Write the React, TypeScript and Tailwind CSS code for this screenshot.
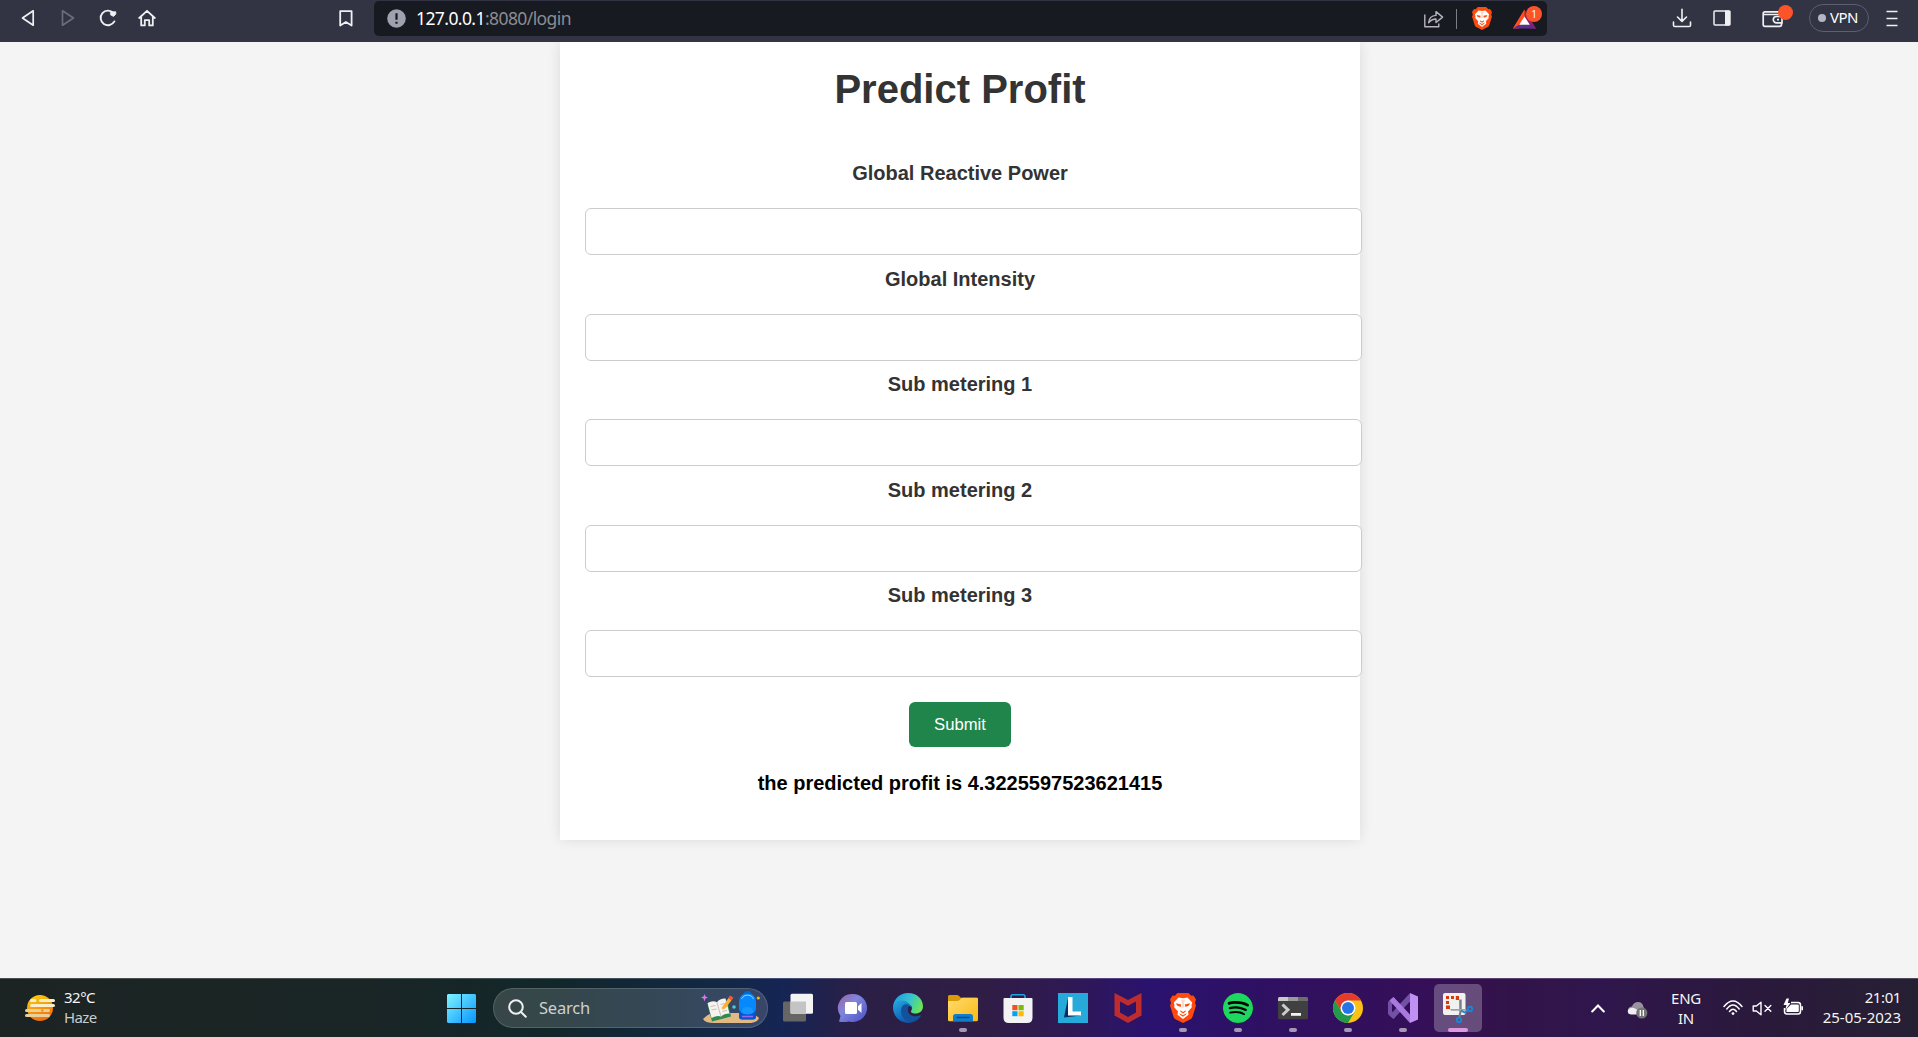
import React from "react";
import { SiSpotify } from "react-icons/si";

const fields = [
  "Global Reactive Power",
  "Global Intensity",
  "Sub metering 1",
  "Sub metering 2",
  "Sub metering 3",
];

function BraveLion({ className }: { className: string }) {
  return (
    <svg viewBox="0 0 26 30" className={className}>
      <path d="M7.500 0h11l2.700 2.800 2.300-.3 2.500 4-1 3.500 1 2.500-3.500 11.200q-.5 1.500-2 2.500L13 30l-7.500-3.800q-1.500-1-2-2.500L0 12.500 1 10 0 6.500l2.500-4 2.300.3z" fill="#ff4a0d" />
      <path d="M8.500 4.500 13 5.300l4.500-.8 4.700 5-.7 3 .3 1.800-3.800 4.200.5 3.200L13 26l-5.500-4.300.5-3.200-3.800-4.200.3-1.800-.7-3z" fill="#fff" />
      <path d="M6 10.300l5.200 1.200-.6 2.400L7 12.600zM20 10.300l-5.200 1.200.6 2.400 3.600-1.300zM10.200 17.300 13 19l2.800-1.700-.3 1.500L13 20.600l-2.500-1.800zM9.500 20.300l3.500 2 3.500-2-.3 1.200L13 23.700l-3.200-2.200z" fill="#ff4a0d" />
      <path d="M11 6.500 13 7l2-.5-1 4 .3 4h-2.600l.3-4z" fill="#ffd9c9" />
    </svg>
  );
}

function Toolbar() {
  return (
    <header className="flex h-[42px] shrink-0 items-start bg-[#323443] font-['Noto_Sans',sans-serif]">
      <div className="flex h-9 w-[374px] shrink-0 items-center pl-[21px]">
        <svg width="14" height="18" viewBox="0 0 14 18" fill="none" stroke="#f0f0f3" strokeWidth="1.7" strokeLinejoin="round">
          <path d="M12.2 1.8v14.4L1.5 9z" />
        </svg>
        <svg className="ml-[26px]" width="14" height="18" viewBox="0 0 14 18" fill="none" stroke="#6a6c7a" strokeWidth="1.7" strokeLinejoin="round">
          <path d="M1.5 1.8v14.4L12.5 9z" />
        </svg>
        <svg className="ml-[23px]" width="20" height="20" viewBox="0 0 20 20" fill="none" stroke="#f0f0f3" strokeWidth="1.9" strokeLinecap="round">
          <path d="M15.3 4.9A7.3 7.3 0 1 0 16.4 13.4" />
          <path d="M12.8 3.8h5v2.4l-2.3 2.2-2.7-1.4z" fill="#f0f0f3" stroke="#f0f0f3" strokeWidth=".8" />
        </svg>
        <svg className="ml-[20px]" width="18" height="18" viewBox="0 0 18 18" fill="none" stroke="#f0f0f3" strokeWidth="1.8" strokeLinejoin="round" strokeLinecap="round">
          <path d="M1.2 9 9 1.8 16.8 9M3.2 7.6v8.8h3.6v-5.2h4.4v5.2h3.6V7.6" />
        </svg>
        <svg className="ml-[183px]" width="14" height="17" viewBox="0 0 14 17" fill="none" stroke="#f0f0f3" strokeWidth="1.8" strokeLinejoin="round">
          <path d="M1.2 1.2h11.4v14.4L6.9 12l-5.7 3.6z" />
        </svg>
      </div>

      <div className="mt-px flex h-[35px] w-[1173px] shrink-0 items-center rounded-[5px] bg-[#181a21] pl-[13px]">
        <svg width="19" height="19" viewBox="0 0 19 19">
          <circle cx="9.5" cy="9.5" r="9.3" fill="#a0a1ae" />
          <path d="M9.5 4.2v6.5M9.5 12.8v2" stroke="#181a21" strokeWidth="2.2" />
        </svg>
        <div className="-mt-[2px] ml-[10px] w-[1001px] text-[17.5px] leading-[24px] tracking-[-0.58px] text-[#8a8c91]">
          <span className="text-white">127.0.0.1</span>:8080/login
        </div>
        <svg className="ml-[6px]" width="21" height="18" viewBox="0 0 21 18" fill="none" stroke="#b5b6bb" strokeWidth="1.4" strokeLinejoin="round">
          <path d="M1.8 4.4v12.4h14v-3.4" />
          <path d="M5.6 12.8C6 8 9 5.6 13 5.4V1.6l6.6 5.5-6.6 5.4V9c-3.2 0-5.4 1.2-7.4 3.8z" />
        </svg>
        <span className="ml-[12px] h-5 w-px bg-[#7c7e83]" />
        <BraveLion className="ml-[15px] h-[23px] w-5" />
        <span className="relative ml-[21px] block h-[21px] w-[23px]">
          <svg className="absolute inset-0" width="23" height="21" viewBox="0 0 24 21">
            <path d="M12 1 0 21h6.5L12 11z" fill="#ff4d20" />
            <path d="M12 1l12 20h-6.5L12 11z" fill="#9e1f63" />
            <path d="M0 21l4.500-4.500h15L24 21z" fill="#5b2d91" />
            <path d="M0 21 12 1v9L6 17z" fill="#ff4d20" />
            <path d="M12 8.500 6.500 17h11z" fill="#fff" />
          </svg>
          <span className="absolute -top-[2px] left-[13px] flex h-[16px] w-[16px] items-center justify-center rounded-full bg-[#fb542b] text-[10px] leading-none text-white">1</span>
        </span>
      </div>

      <div className="flex h-9 w-[371px] items-center pl-[125px]">
        <svg width="20" height="20" viewBox="0 0 20 20" fill="none" stroke="#f0f0f3" strokeWidth="1.6" strokeLinecap="round" strokeLinejoin="round">
          <path d="M10 1.200v12M5.500 9 10 13.400 14.500 9M1.500 14v3.200q0 1.300 1.300 1.300h14.400q1.300 0 1.300-1.300V14" />
        </svg>
        <svg className="ml-[21px]" width="18" height="16" viewBox="0 0 18 16">
          <rect x="1" y="1" width="15.500" height="14" rx="1" fill="none" stroke="#f0f0f3" strokeWidth="1.500" />
          <path d="M12 .500h4.600q1 0 1 1v13q0 1-1 1H12z" fill="#f0f0f3" />
        </svg>
        <span className="relative ml-[31px] block h-[18px] w-[30px]">
          <svg width="22" height="19" viewBox="0 0 22 19" fill="none" stroke="#f0f0f3" strokeWidth="1.700" strokeLinejoin="round">
            <path d="M20 7V4.500Q20 2.800 18.200 2.800H3Q1.200 2.800 1.200 4.500v11Q1.200 17.300 3 17.300h14.500q2 0 2-1.800V14M1.500 5.500H18" />
            <path d="M20 7.500h-5.500a3.200 3.200 0 0 0 0 6.400H20zM15 10.700h2" />
          </svg>
          <span className="absolute -top-[4px] left-[16px] h-[15px] w-[15px] rounded-full bg-[#fb542b]" />
        </span>
        <div className="ml-[17px] flex h-[28px] w-[60px] items-center rounded-full border border-[#5c5e72] pl-[8px] text-[15px] leading-none tracking-[-0.5px] text-white">
          <span className="mr-[4px] h-[8px] w-[8px] rounded-full bg-[#b4b5c6]" />
          <span className="-mt-[2px]">VPN</span>
        </div>
        <svg className="ml-[17px]" width="12" height="17" viewBox="0 0 12 17" stroke="#f0f0f3" strokeWidth="1.600">
          <path d="M.5 1.500h11M.5 8.500h11M.5 15.500h11" />
        </svg>
      </div>
    </header>
  );
}

function FormPage() {
  return (
    <main className="min-h-0 flex-1 overflow-hidden bg-[#f4f4f4] font-['Liberation_Sans',Arial,sans-serif]">
      <form className="ml-[560px] flex h-[798px] w-[800px] flex-col items-center bg-white pt-[24px] shadow-[0_0_12.5px_rgba(0,0,0,0.1)]">
        <h1 className="mb-[49px] h-[46px] text-[40px] font-bold leading-[46px] text-[#333333]">Predict Profit</h1>
        {fields.map((name) => (
          <div key={name} className="flex h-[105.5px] w-full flex-col items-center">
            <label className="h-6 text-[20px] font-bold leading-6 text-[#333333]">{name}</label>
            <input
              aria-label={name}
              className="mt-[23px] ml-[25px] h-[47px] w-[777px] shrink-0 self-start rounded-[6px] border border-[#cccccc] bg-white px-3"
            />
          </div>
        ))}
        <button type="button" className="mt-[13.5px] h-[45px] w-[102px] rounded-[6px] bg-[#20854b] text-[16.67px] leading-[45px] text-white">
          Submit
        </button>
        <p className="mt-6 text-[20px] font-bold leading-6 text-black">the predicted profit is 4.3225597523621415</p>
      </form>
    </main>
  );
}

const icon = "h-[30px] w-[30px] overflow-visible";

const TaskView = () => (
  <svg className={icon} viewBox="0 0 30 30">
    <rect x="0" y="8.500" width="23" height="20" rx="1.500" fill="#666" />
    <rect x="7.500" y=".8" width="22.500" height="20" rx="1.500" fill="#f4f4f4" />
    <path d="M7.500 8.500H23v12.300H9q-1.500 0-1.500-1.500z" fill="#c4c4c4" />
  </svg>
);
const Chat = () => (
  <svg className={icon} viewBox="0 0 30 30">
    <defs>
      <linearGradient id="chat" x1="0" y1="0" x2="1" y2="1">
        <stop offset="0" stopColor="#a05f9b" /><stop offset=".4" stopColor="#7f86dc" /><stop offset="1" stopColor="#4b50c4" />
      </linearGradient>
    </defs>
    <path d="M15 1a14 14 0 1 1-4 27.400Q6 29.600 1 28.700L2.500 23A14 14 0 0 1 15 1z" fill="url(#chat)" />
    <rect x="7" y="9" width="12" height="12" rx="1.500" fill="#fff" />
    <path d="M20 13.200l3.500-3.200v10L20 16.800z" fill="#fff" />
  </svg>
);
const Edge = () => (
  <svg className={icon} viewBox="0 0 30 30">
    <defs>
      <linearGradient id="edgeTop" x1="0" y1=".3" x2="1" y2=".6">
        <stop offset="0" stopColor="#1c9ee0" /><stop offset=".5" stopColor="#35c1d1" /><stop offset="1" stopColor="#6be84f" />
      </linearGradient>
      <linearGradient id="edgeLow" x1="0" y1="0" x2=".5" y2="1">
        <stop offset="0" stopColor="#27a9e1" /><stop offset="1" stopColor="#0c59b5" />
      </linearGradient>
    </defs>
    <path d="M0 13.500C1 5.500 7 0 15 0c9 0 15 6.200 15 13.400 0 4.600-3.600 7-7.500 7-3.800 0-5.300-1.600-4.200-3 1.300-1.600 1-5.400-3.200-6.400z" fill="url(#edgeTop)" />
    <path d="M0 14.600C1 9.400 5 7.500 8.600 7.500c5.400 0 9 3.500 9.500 6.500-5-3-8.500.5-8.500 4.200 0 5.800 4.400 10 9.400 11A15 15 0 0 1 0 14.600z" fill="url(#edgeLow)" />
    <path d="M15.500 11.800C10.500 10 8 14 8 18c0 7.500 7.500 12.300 12.300 11 3.200-1 5.600-3 7.600-6 .3-.6-.3-1-.8-.7-6 2.800-12.300-.4-12.300-5.300 0-2 1.200-3.600.7-5.200z" fill="#12529b" />
  </svg>
);
const Explorer = () => (
  <svg className={icon} viewBox="0 0 30 30">
    <defs>
      <linearGradient id="folder" x1="0" y1="0" x2="1" y2="1">
        <stop offset="0" stopColor="#ffdc70" /><stop offset="1" stopColor="#fcb813" />
      </linearGradient>
    </defs>
    <path d="M0 3.500Q0 2 1.500 2H9q1 0 1.800.8L13 4.700h15.500q1.500 0 1.500 1.500V12H0z" fill="#dc9a09" />
    <path d="M0 8h9.500q1 0 1.800-.8L13 5.500q.6-.8 1.500-.8H29q1 0 1 1v21q0 1.500-1.500 1.500h-27Q0 28.200 0 26.700z" fill="url(#folder)" />
    <path d="M5 28.200v-4.700q0-2.500 2.500-2.500h15q2.500 0 2.500 2.500v4.700z" fill="#117bcd" />
    <path d="M9 24.500h12" stroke="#074c8c" strokeWidth="1.300" strokeLinecap="round" />
  </svg>
);
const Store = () => (
  <svg className={icon} viewBox="0 0 30 30">
    <path d="M8 7V3.500Q8 1.700 9.800 1.700h10.400Q22 1.700 22 3.500V7" fill="none" stroke="#1da4e5" strokeWidth="1.600" />
    <path d="M.5 6q0-.9 1-.9h27q1 0 1 .9v18.500q0 5.500-5.500 5.500H6Q.5 30 .5 24.500z" fill="#f3f3f3" />
    <path d="M9.300 12h5.200v5.200H9.300z" fill="#f25022" />
    <path d="M15.500 12h5.200v5.200h-5.200z" fill="#7fba00" />
    <path d="M9.300 18.200h5.200v5H9.300z" fill="#00a4ef" />
    <path d="M15.500 18.200h5.200v5h-5.200z" fill="#ffb900" />
  </svg>
);
const LApp = () => (
  <svg className={icon} viewBox="0 0 30 30">
    <path d="M0 0h30v30H0z" fill="#26aad9" />
    <path d="M10 5 6 24.500l17-2L10 19z" fill="#0a2c62" />
    <path d="M10 4h4.500v14.500H23v4H10z" fill="#fff" />
  </svg>
);
const Shield = () => (
  <svg className={icon} viewBox="0 0 30 30">
    <path d="M1.500 0 15 7 28.500 0v22.500L15 30 1.500 22.500zM7 8.500v11l8 4.500 8-4.500v-11l-8 4.300z" fill="#bf2c2d" fillRule="evenodd" />
  </svg>
);
const BraveApp = () => <BraveLion className="h-[30px] w-[26px]" />;
const Spotify = () => (
  <span className="flex h-[30px] w-[30px] items-center justify-center rounded-full bg-black">
    <SiSpotify className="h-[30px] w-[30px] shrink-0 text-[#1ed760]" />
  </span>
);
const Terminal = () => (
  <svg className={icon} viewBox="0 0 30 30">
    <rect y="4" width="30" height="22.200" rx="1.500" fill="#404040" />
    <path d="M0 8V5.500Q0 4 1.500 4H10v4z" fill="#cacaca" />
    <path d="M10 4h10v4H10z" fill="#999" />
    <path d="M20 4h8.500Q30 4 30 5.500V8H20z" fill="#6d6d6d" />
    <path d="m4.500 11.500 5.500 5.300-5.500 5.200" fill="none" stroke="#ccc" strokeWidth="3" />
    <path d="M13 20h10v2.800H13z" fill="#f2f2f2" />
  </svg>
);
const Chrome = () => (
  <svg className={icon} viewBox="0 0 30 30">
    <circle cx="15" cy="15" r="15" fill="#fbc116" />
    <path d="M2 7.500A15 15 0 0 1 28 7.500H15L8.500 18.700z" fill="#e33b2e" />
    <path d="M2 7.500 8.500 18.700 15 22.500l6.500-3.800L15 30A15 15 0 0 1 2 7.500z" fill="#229a4b" />
    <circle cx="15" cy="15" r="7.500" fill="#fff" />
    <circle cx="15" cy="15" r="6" fill="#2675e8" />
  </svg>
);
const VisualStudio = () => (
  <svg className={icon} viewBox="0 0 30 30">
    <path d="M0 9 1.500 7.500 5.500 4 9 8.500 4 11.500v7L9 21.500 5.500 26 1.500 22.500 0 21z" fill="#7250a5" />
    <path d="M22 0v8.500L5.500 26l-4-3.500z" fill="#7250a5" />
    <path d="M1.500 7.500 5.500 4 22 21.500V30z" fill="#a979df" />
    <path d="M22 0l8 3.500v23L22 30z" fill="#c190f3" />
  </svg>
);
const Snip = () => (
  <svg className={icon} viewBox="0 0 30 30">
    <rect x="0" y="0" width="22.500" height="22" rx="2" fill="#f1f1f1" />
    <path d="M3 3h3v3H3zM8 3h3v3H8zM12.800 3H16v4h-3.200zM3 8h3v3H3zM3 12.500h4V16H3z" fill="#d83b0a" />
    <path d="M16.200 6.500h2.500v12l-1.300 6-2-.500.900-5.500z" fill="#788087" />
    <path d="M6.500 16h16l2 1.800H8.500z" fill="#9ca4aa" />
    <circle cx="27" cy="16" r="2.200" fill="none" stroke="#1887d5" strokeWidth="1.900" />
    <circle cx="16" cy="27" r="2.200" fill="none" stroke="#1887d5" strokeWidth="1.900" />
    <path d="m18 17.500 3.500 2 3.800-2" fill="none" stroke="#1887d5" strokeWidth="1.800" />
  </svg>
);

const apps: { name: string; Icon: () => React.ReactElement; state?: "open" | "active" }[] = [
  { name: "taskview", Icon: TaskView },
  { name: "chat", Icon: Chat },
  { name: "edge", Icon: Edge },
  { name: "explorer", Icon: Explorer, state: "open" },
  { name: "store", Icon: Store },
  { name: "l", Icon: LApp },
  { name: "shield", Icon: Shield },
  { name: "brave", Icon: BraveApp, state: "open" },
  { name: "spotify", Icon: Spotify, state: "open" },
  { name: "terminal", Icon: Terminal, state: "open" },
  { name: "chrome", Icon: Chrome, state: "open" },
  { name: "vs", Icon: VisualStudio, state: "open" },
  { name: "snip", Icon: Snip, state: "active" },
];

function Weather() {
  return (
    <svg width="30" height="26" viewBox="0 0 30 26">
      <defs>
        <linearGradient id="sun" x1=".2" y1="0" x2=".6" y2="1">
          <stop offset="0" stopColor="#ffcd0f" /><stop offset="1" stopColor="#f2690c" />
        </linearGradient>
      </defs>
      <circle cx="15" cy="13" r="13" fill="url(#sun)" />
      <g strokeWidth="3" strokeLinecap="round">
        <path d="M6.500 5.500H10M15.500 5.500h13M6.500 10.500h22" stroke="#fbeecb" />
        <path d="M1.500 15.500h22M1.500 20.500h22" stroke="#e9cf9a" />
        <path d="M17.300 15.500h0" stroke="#f28d1a" strokeWidth="2.500" />
      </g>
    </svg>
  );
}

function SearchArt() {
  return (
    <svg className="ml-auto mr-[7px]" width="60" height="34" viewBox="0 0 60 34">
      <path d="M3 28C9 22 14 20 24 22h25q6 1 10 5-1 4-8 5H14Q5 32 3 28z" fill="#e2b983" />
      <path d="M4.500 3l1 2.500L8 6.500 5.500 7.500l-1 3-1-3-2.500-1 2.500-1z" fill="#d974f2" />
      <path d="m7.500 14 20-4 3.500 15.500L12 30.500z" fill="#2d8a50" />
      <path d="M7.500 12q5.500-3 9.500-.8 3-4 8.500-3.700l4 15q-5.500 0-8.500 3-4-1.300-9.500 1.500z" fill="#f6f2ee" />
      <path d="m17 11.500 4 14M10.500 15.500l5-1M11.500 19l5-1M20.500 13.500l4-1M21.500 17l5-1.500M22.500 20.500l4.500-1.200" stroke="#bcaeb0" strokeWidth=".8" />
      <path d="M22.500 15.500 28.500 7l3 2.200-6 8-3.500 1.500z" fill="#ffaf35" />
      <path d="m28.300 7 1.700-2.500 3.500 2.300-1.900 2.500z" fill="#f25b45" />
      <circle cx="34" cy="16" r="1.800" fill="#54c6dc" />
      <circle cx="58.300" cy="7" r="1.600" fill="#f5b80e" />
      <path d="M44.500 3.500q0-2.500 3-2.500t3 2.500" stroke="#0867cb" strokeWidth="1.800" fill="none" />
      <path d="M39 11q0-8.500 8.500-8.500T56 11v14.500q0 3-3 3H42q-3 0-3-3z" fill="#0788fb" />
      <path d="M39 18v7.500q0 3 3 3h11q3 0 3-3V18q-1 5-8.500 5T39 18z" fill="#0754cf" />
      <path d="M41.500 21.500q0-5.500 6-5.500t6 5.500q-2 2-6 2t-6-2z" fill="#1596ff" />
      <path d="M41.500 8q1.500-4 6-4t6 4" stroke="#8ad1ff" fill="none" />
      <path d="M42 25.500h11" stroke="#8c6af4" strokeWidth="1.600" />
    </svg>
  );
}

function Taskbar() {
  return (
    <footer className="flex h-[59px] shrink-0 items-center border-t border-white/20 bg-[linear-gradient(90deg,#1c2423_0,#1a2525_360px,#12272b_560px,#122845_720px,#152554_780px,#2a1f46_860px,#301d45_980px,#2f1954_1070px,#2a126f_1150px,#30105f_1300px,#350f58_1420px,#321349_1510px,#2f164c_1600px,#2a193b_1760px,#262033_1918px)] font-['Noto_Sans',sans-serif] text-[15px] leading-5 text-[#f5f5f5]">
      <div className="flex w-[447px] shrink-0 items-center pl-[25px]">
        <Weather />
        <div className="-mt-[3px] ml-[9px]">
          <div className="tracking-[-0.5px]">32°C</div>
          <div className="tracking-[-0.6px] text-[#c9cccb]">Haze</div>
        </div>
      </div>
      <svg width="29" height="29" viewBox="0 0 29 29">
        <defs>
          <linearGradient id="win" x1="0" y1="0" x2="1" y2="1">
            <stop offset="0" stopColor="#80f3ff" /><stop offset="1" stopColor="#0595ff" />
          </linearGradient>
        </defs>
        <path d="M1 0h13v14H0V1zM15 0h13l1 1v13H15zM0 15h14v14H1l-1-1zM15 15h14v13l-1 1H15z" fill="url(#win)" />
      </svg>
      <div className="ml-[17px] flex h-10 w-[275px] shrink-0 items-center rounded-full border border-white/15 bg-white/15 pl-[14px]">
        <svg width="19" height="19" viewBox="0 0 19 19" fill="none" stroke="#eef0f0" strokeWidth="2" strokeLinecap="round">
          <circle cx="8" cy="8" r="6.800" /><path d="m13 13 4.800 4.800" />
        </svg>
        <span className="ml-[12px] text-[16.5px] tracking-[-0.2px] text-[#cdd2d3]">Search</span>
        <SearchArt />
      </div>
      <div className="ml-[2.5px] flex h-full shrink-0 items-center">
        {apps.map(({ name, Icon, state }) => (
          <div key={name} className="relative flex h-full w-[55px] items-center justify-center">
            {state === "active" && <span className="absolute left-[3.500px] top-[5px] h-[48px] w-[48px] rounded-[5px] bg-white/25" />}
            <span className="relative"><Icon /></span>
            {state === "open" && <span className="absolute bottom-[5px] left-[23.500px] h-[4px] w-[8px] rounded-full bg-[#a598b5]" />}
            {state === "active" && <span className="absolute bottom-[5px] left-[17.500px] h-[4px] w-[20px] rounded-full bg-[#dd9ae0]" />}
          </div>
        ))}
      </div>
      <div className="ml-auto flex shrink-0 items-center pr-[17px]">
        <svg width="14" height="9" viewBox="0 0 14 9" fill="none" stroke="#fff" strokeWidth="2" strokeLinecap="round">
          <path d="m1.200 7.500 5.800-6 5.800 6" />
        </svg>
        <svg className="ml-[22px] mt-[3px]" width="21" height="18" viewBox="0 0 21 18">
          <path d="M1 9Q1.500 5.500 5 5.500 6.500 1 11 1t5.500 5Q18 7 17 10L8 13H4Q0 13 1 9z" fill="#99939f" />
          <path d="M1 9q2-3 6-2l7 4-2 2.500H4Q0 13 1 9z" fill="#efedf1" />
          <circle cx="14.800" cy="12" r="5.600" fill="#747474" />
          <path d="M13.300 9v6M16.300 9v6" stroke="#fff" strokeWidth="1.300" />
        </svg>
        <div className="-mt-px ml-[16px] w-[44px] text-center tracking-[-0.300px]">
          <div>ENG</div>
          <div>IN</div>
        </div>
        <svg className="ml-[15px]" width="20" height="16" viewBox="0 0 20 16" fill="none" stroke="#fff" strokeWidth="1.500" strokeLinecap="round">
          <path d="M1 6.500Q10-4.500 19 6.500M3.800 9Q10 1 16.200 9M6.500 11.400q3.500-4.200 7 0" />
          <circle cx="10" cy="13.600" r="1.400" fill="#fff" stroke="none" />
        </svg>
        <svg className="ml-[9px]" width="20" height="15" viewBox="0 0 20 15" fill="none" stroke="#fff" strokeWidth="1.400" strokeLinejoin="round" strokeLinecap="round">
          <path d="M1.200 5v5h3.200L9 13.800V1.200L4.400 5zM13 4.500l5.800 5.800M18.800 4.500 13 10.300" />
        </svg>
        <svg className="ml-[11px] -mt-[3px]" width="21" height="18" viewBox="0 0 21 18">
          <path d="M8 4.500h7q2.500 0 2.500 2.500v6.500q0 2.500-2.500 2.500H4q-2.500 0-2.500-2.500V10" fill="none" stroke="#fff" strokeWidth="1.500" />
          <path d="M8 6.500h7q.8 0 .8.800v5.900q0 .8-.8.800H3.500v-3zM18.300 8.200h1.700v4h-1.700zM3.500.5 .5 7h3L2 12.500 7.500 5H4.800L6 .5z" fill="#fff" />
        </svg>
        <div className="-mt-[3px] w-[97px] text-right">
          <div className="tracking-[-0.400px]">21:01</div>
          <div>25-05-2023</div>
        </div>
      </div>
    </footer>
  );
}

export default function App() {
  return (
    <div className="flex h-[1037px] w-[1918px] flex-col overflow-hidden">
      <Toolbar />
      <FormPage />
      <Taskbar />
    </div>
  );
}
